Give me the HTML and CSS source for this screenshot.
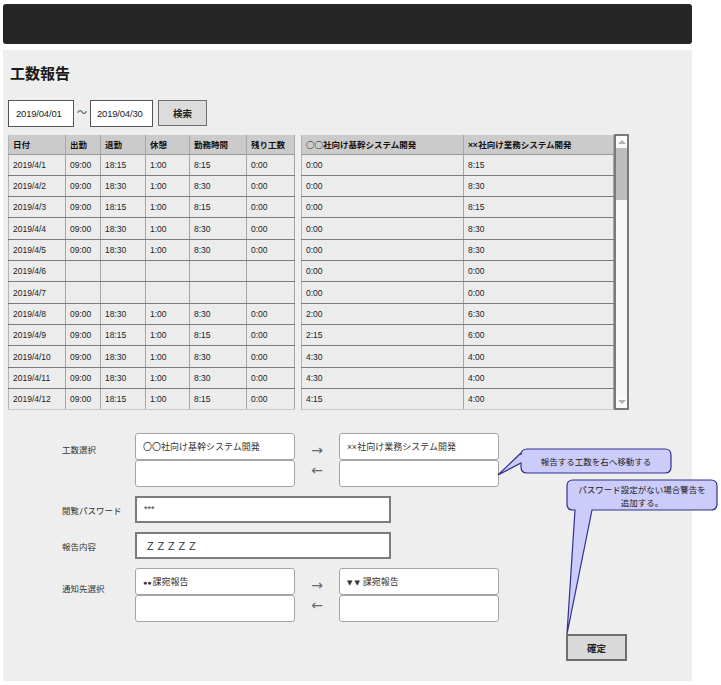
FILE: index.html
```html
<!DOCTYPE html>
<html lang="ja">
<head>
<meta charset="utf-8">
<title>工数報告</title>
<link rel="stylesheet" href="styles.css">
</head>
<body>
<div class="page">
  <div class="topbar"></div>
  <main class="panel">
    <h1 class="title">工数報告</h1>
    <div class="search">
      <div class="date-input">2019/04/01</div>
      <span class="tilde">～</span>
      <div class="date-input date-input--second">2019/04/30</div>
      <button class="search-btn" type="button">検索</button>
    </div>

    <div class="grid-wrap">
      <table class="tbl tbl-left">
        <colgroup><col class="c1"><col class="c2"><col class="c3"><col class="c4"><col class="c5"><col class="c6"></colgroup>
        <thead><tr><th>日付</th><th>出勤</th><th>退勤</th><th>休憩</th><th>勤務時間</th><th>残り工数</th></tr></thead>
        <tbody>
          <tr><td>2019/4/1</td><td>09:00</td><td>18:15</td><td>1:00</td><td>8:15</td><td>0:00</td></tr>
          <tr><td>2019/4/2</td><td>09:00</td><td>18:30</td><td>1:00</td><td>8:30</td><td>0:00</td></tr>
          <tr><td>2019/4/3</td><td>09:00</td><td>18:15</td><td>1:00</td><td>8:15</td><td>0:00</td></tr>
          <tr><td>2019/4/4</td><td>09:00</td><td>18:30</td><td>1:00</td><td>8:30</td><td>0:00</td></tr>
          <tr><td>2019/4/5</td><td>09:00</td><td>18:30</td><td>1:00</td><td>8:30</td><td>0:00</td></tr>
          <tr><td>2019/4/6</td><td></td><td></td><td></td><td></td><td></td></tr>
          <tr><td>2019/4/7</td><td></td><td></td><td></td><td></td><td></td></tr>
          <tr><td>2019/4/8</td><td>09:00</td><td>18:30</td><td>1:00</td><td>8:30</td><td>0:00</td></tr>
          <tr><td>2019/4/9</td><td>09:00</td><td>18:15</td><td>1:00</td><td>8:15</td><td>0:00</td></tr>
          <tr><td>2019/4/10</td><td>09:00</td><td>18:30</td><td>1:00</td><td>8:30</td><td>0:00</td></tr>
          <tr><td>2019/4/11</td><td>09:00</td><td>18:30</td><td>1:00</td><td>8:30</td><td>0:00</td></tr>
          <tr><td>2019/4/12</td><td>09:00</td><td>18:15</td><td>1:00</td><td>8:15</td><td>0:00</td></tr>
        </tbody>
      </table>
      <table class="tbl tbl-right">
        <colgroup><col class="r1"><col class="r2"></colgroup>
        <thead><tr><th>○○社向け基幹システム開発</th><th><span class="sym">××</span>社向け業務システム開発</th></tr></thead>
        <tbody>
          <tr><td>0:00</td><td>8:15</td></tr>
          <tr><td>0:00</td><td>8:30</td></tr>
          <tr><td>0:00</td><td>8:15</td></tr>
          <tr><td>0:00</td><td>8:30</td></tr>
          <tr><td>0:00</td><td>8:30</td></tr>
          <tr><td>0:00</td><td>0:00</td></tr>
          <tr><td>0:00</td><td>0:00</td></tr>
          <tr><td>2:00</td><td>6:30</td></tr>
          <tr><td>2:15</td><td>6:00</td></tr>
          <tr><td>4:30</td><td>4:00</td></tr>
          <tr><td>4:30</td><td>4:00</td></tr>
          <tr><td>4:15</td><td>4:00</td></tr>
        </tbody>
      </table>
      <div class="scrollbar">
        <div class="sb-btn"><span class="tri-up"></span></div>
        <div class="sb-thumb"></div>
        <div class="sb-track"></div>
        <div class="sb-btn"><span class="tri-down"></span></div>
      </div>
    </div>

    <div class="form">
      <div class="frow">
        <div class="flabel flabel--top">工数選択</div>
        <div class="transfer">
          <div class="tbox"><div class="tcell">〇〇社向け基幹システム開発</div><div class="tcell"></div></div>
          <div class="arrows"><span>→</span><span>←</span></div>
          <div class="tbox"><div class="tcell"><span class="sym">××</span>社向け業務システム開発</div><div class="tcell"></div></div>
        </div>
      </div>
      <div class="frow frow--center">
        <div class="flabel">閲覧パスワード</div>
        <div class="tinput">***</div>
      </div>
      <div class="frow frow--center">
        <div class="flabel">報告内容</div>
        <div class="tinput tinput--z">ＺＺＺＺＺ</div>
      </div>
      <div class="frow">
        <div class="flabel flabel--top2">通知先選択</div>
        <div class="transfer">
          <div class="tbox"><div class="tcell"><span class="sym sym--dot">●●</span>課宛報告</div><div class="tcell"></div></div>
          <div class="arrows"><span>→</span><span>←</span></div>
          <div class="tbox"><div class="tcell"><span class="sym sym--tri">▼▼</span>課宛報告</div><div class="tcell"></div></div>
        </div>
      </div>
    </div>
    <button class="confirm" type="button">確定</button>
  </main>

  <svg class="overlay" width="721" height="685" viewBox="0 0 721 685" aria-hidden="true">
    <path d="M527,449 H665 Q671,449 671,455 V467 Q671,473 665,473 H527 Q521,473 521,467 V463 L498,475 L521,453 V455 Q521,449 527,449 Z" fill="#ccccfa" stroke="#30308a" stroke-width="1.2"/>
    <path d="M573,480 H711 Q717,480 717,486 V504 Q717,510 711,510 H592 L567,634 L575,510 H573 Q567,510 567,504 V486 Q567,480 573,480 Z" fill="#ccccfa" stroke="#30308a" stroke-width="1.2"/>
  </svg>
  <div class="note note-1">報告する工数を右へ移動する</div>
  <div class="note note-2">パスワード設定がない場合警告を<br>追加する。</div>
</div>
</body>
</html>
```
FILE: styles.css
```css
* { box-sizing: border-box; }
html, body { margin: 0; padding: 0; background: #ffffff; }
body {
  font-family: "Liberation Sans", "Noto Sans CJK JP", sans-serif;
  color: #222;
}
.page { position: relative; width: 721px; height: 685px; overflow: hidden; }

.topbar {
  margin: 4px 0 0 3px;
  width: 689px;
  height: 40px;
  background: #262626;
  border-radius: 3px;
}

.panel {
  margin: 6px 0 0 3px;
  width: 689px;
  height: 631px;
  background: #eeeeee;
  padding: 14px 0 0 5px;
}

.title {
  margin: 0 0 0 2px;
  font-size: 15px;
  line-height: 18px;
  font-weight: bold;
  color: #1a1a1a;
  font-family: "Noto Sans CJK JP", sans-serif;
}

.search {
  display: flex;
  align-items: flex-start;
  margin-top: 18px;
  height: 27px;
}
.date-input {
  width: 66px;
  height: 27px;
  background: #fff;
  border: 1px solid #555;
  font-size: 9.5px;
  line-height: 25px;
  padding-left: 7px;
  color: #222;
  letter-spacing: -0.2px;
}
.date-input--second { width: 63px; padding-left: 6px; }
.tilde {
  width: 16px;
  text-align: center;
  font-size: 10px;
  line-height: 25px;
  color: #444;
}
.search-btn {
  margin-left: 5px;
  width: 49px;
  height: 26px;
  background: #dcdcdc;
  border: 1px solid #6e6e6e;
  padding: 0;
  font-family: "Noto Sans CJK JP", sans-serif;
  font-size: 9.5px;
  font-weight: bold;
  color: #222;
}

.grid-wrap {
  display: flex;
  align-items: flex-start;
  margin-top: 8px;
}
.tbl {
  border-collapse: collapse;
  table-layout: fixed;
  background: #ececec;
  border-left: 1px solid #b4b4b4;
  border-bottom: 1px solid #c8c8c8;
}
.tbl-left { width: 286px; }
.tbl-right { width: 312px; margin-left: 6px; }
.c1 { width: 57px; } .c2 { width: 35px; } .c3 { width: 45px; }
.c4 { width: 44px; } .c5 { width: 57px; } .c6 { width: 48px; }
.r1 { width: 162px; } .r2 { width: 150px; }

.tbl th {
  height: 19px;
  background: #cbcbcb;
  font-family: "Noto Sans CJK JP", sans-serif;
  font-size: 8.5px;
  font-weight: bold;
  text-align: left;
  padding: 0 0 0 4px;
  border-right: 1px solid #a8a8a8;
  border-bottom: 1px solid #9a9a9a;
  white-space: nowrap;
  overflow: hidden;
  color: #111;
}
.tbl td {
  height: 21.33px;
  font-size: 8.5px;
  padding: 0 0 0 4px;
  border-right: 1px solid #a6a6a6;
  border-bottom: 1px solid #7c7c7c;
  white-space: nowrap;
  color: #222;
}
.tbl tbody tr:last-child td { border-bottom: 1px solid #c8c8c8; }

.sym {
  font-family: "Liberation Sans", "DejaVu Sans", sans-serif;
  font-size: 8.5px;
  letter-spacing: -0.3px;
  margin-right: 1px;
}
.sym--dot { font-size: 7px; letter-spacing: 0; }
.sym--tri { font-size: 7px; letter-spacing: 2px; font-family: "DejaVu Sans", sans-serif; }

.scrollbar {
  width: 15px;
  height: 276px;
  margin-top: -1px;
  border: 2px solid #7a7a7a;
  background: #f6f6f6;
  display: flex;
  flex-direction: column;
}
.sb-btn {
  height: 12px;
  display: flex;
  align-items: center;
  justify-content: center;
  background: #fafafa;
}
.sb-thumb { height: 52px; background: #bdbdbd; }
.sb-track { flex: 1; }
.tri-up, .tri-down {
  width: 0; height: 0;
  border-left: 4px solid transparent;
  border-right: 4px solid transparent;
}
.tri-up { border-bottom: 4px solid #b0b0b0; }
.tri-down { border-top: 4px solid #b0b0b0; }

.form {
  margin: 23px 0 0 54px;
  display: flex;
  flex-direction: column;
  gap: 8px;
}
.frow { display: flex; align-items: flex-start; }
.frow + .frow { margin-top: 1px; }
.frow--center { align-items: center; }
.flabel {
  width: 73px;
  font-family: "Noto Sans CJK JP", sans-serif;
  font-size: 8.5px;
  line-height: 12px;
  color: #333;
  white-space: nowrap;
}
.flabel--top { padding-top: 10px; }
.flabel--top2 { padding-top: 14px; }

.transfer { display: flex; }
.tbox { width: 160px; display: flex; flex-direction: column; }
.tcell {
  height: 27px;
  background: #fff;
  border: 1px solid #a4a4a4;
  border-radius: 3px;
  padding-left: 7px;
  font-family: "Noto Sans CJK JP", sans-serif;
  font-size: 9px;
  line-height: 25px;
  color: #333;
  white-space: nowrap;
}
.arrows {
  width: 44px;
  height: 54px;
  display: flex;
  flex-direction: column;
  justify-content: center;
  align-items: center;
  font-size: 14px;
  line-height: 20px;
  color: #6a6a6a;
  font-family: "DejaVu Sans", sans-serif;
}

.tinput {
  width: 256px;
  height: 27px;
  background: #fff;
  border: 2px solid #7c7c7c;
  padding-left: 7px;
  font-size: 9px;
  line-height: 23px;
  color: #333;
}
.tinput--z {
  font-family: "Noto Sans CJK JP", sans-serif;
  font-size: 10.5px;
  padding-left: 8px;
}

.confirm {
  display: block;
  margin: 12px 0 0 558px;
  width: 61px;
  height: 27px;
  background: #d9d9d9;
  border: 2px solid #6e6e6e;
  padding: 0;
  font-family: "Noto Sans CJK JP", sans-serif;
  font-size: 9.5px;
  font-weight: bold;
  color: #222;
}

.overlay { position: absolute; left: 0; top: 0; pointer-events: none; }
.note {
  position: absolute;
  font-family: "Noto Sans CJK JP", sans-serif;
  font-size: 8.5px;
  color: #222;
  text-align: center;
  white-space: nowrap;
}
.note-1 { left: 521px; top: 455px; width: 150px; line-height: 12px; }
.note-2 { left: 567px; top: 483px; width: 150px; line-height: 12.5px; }
```
